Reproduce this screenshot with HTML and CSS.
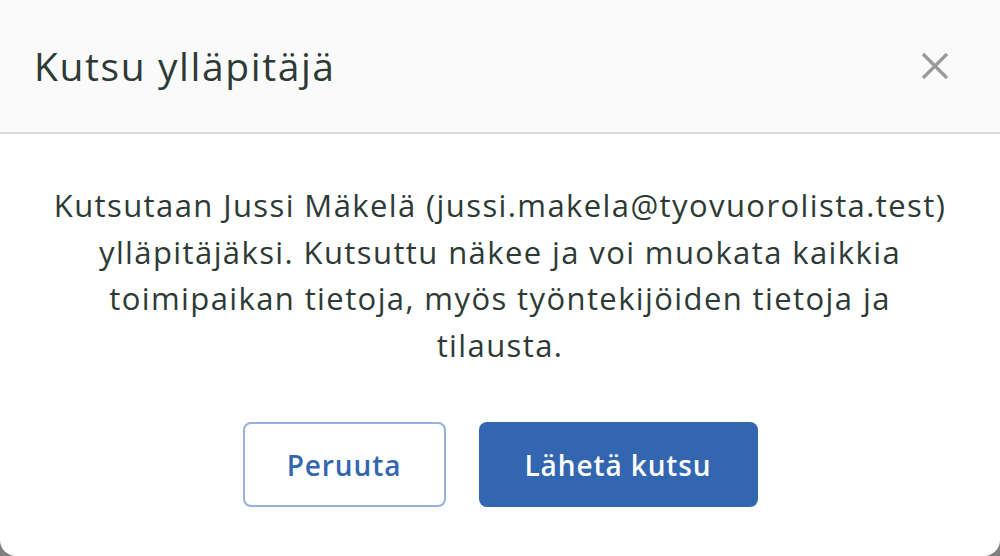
FILE: index.html
```html
<!DOCTYPE html>
<html lang="fi">
<head>
    <meta charset="UTF-8">
    <meta name="viewport" content="width=device-width, initial-scale=1.0">
    <title>Kutsu ylläpitäjä</title>
    <link rel="stylesheet" href="styles.css">
</head>
<body>
    <div class="modal">
        <header class="modal-header">
            <h2>Kutsu ylläpitäjä</h2>
            <button class="close-btn" aria-label="Sulje">
                <svg width="30" height="30" viewBox="0 0 30 30">
                    <path d="M3 3 L27 27 M27 3 L3 27" stroke="#999" stroke-width="3.2" fill="none"/>
                </svg>
            </button>
        </header>

        <div class="modal-body">
            <p>Kutsutaan Jussi Mäkelä (jussi.makela@tyovuorolista.test)<br>
            ylläpitäjäksi. Kutsuttu näkee ja voi muokata kaikkia<br>
            toimipaikan tietoja, myös työntekijöiden tietoja ja<br>
            tilausta.</p>

            <div class="actions">
                <button class="btn btn-secondary">Peruuta</button>
                <button class="btn btn-primary">Lähetä kutsu</button>
            </div>
        </div>
    </div>
</body>
</html>
```

FILE: styles.css
```css
:root {
    --text: #2d3a35;
    --blue: #3366b0;
    --blue-light: #95b1dc;
}
* {
    box-sizing: border-box;
    margin: 0;
    padding: 0;
    font-family: 'Open Sans', 'Noto Sans', sans-serif;
}
body {
    background-color: #7f7f7f;
    color: var(--text);
    height: 556px;
    overflow: hidden;
}
.modal {
    background: white;
    width: 1000px;
    height: 556px;
    border-radius: 0 0 16px 16px;
    overflow: hidden;
}
.modal-header {
    height: 134px;
    background: #fafafa;
    border-bottom: 2px solid #d9d9d9;
    display: flex;
    align-items: center;
    justify-content: space-between;
    padding: 0 50px 0 34px;
}
.modal-header h2 {
    font-size: 39px;
    font-weight: 500;
    letter-spacing: 1.6px;
    color: var(--text);
    padding-bottom: 2px;
}
.close-btn {
    background: none;
    border: none;
    width: 30px;
    height: 30px;
    cursor: pointer;
    display: flex;
}
.modal-body {
    padding: 48px 20px 0;
    text-align: center;
}
.modal-body p {
    font-size: 31px;
    line-height: 46.5px;
    letter-spacing: 1.4px;
}
.actions {
    display: flex;
    justify-content: center;
    gap: 33px;
    margin-top: 54px;
}
.btn {
    height: 85px;
    border-radius: 8px;
    font-size: 28px;
    font-weight: 600;
    letter-spacing: 0.9px;
    cursor: pointer;
}
.btn-secondary {
    width: 203px;
    background: white;
    color: var(--blue);
    border: 2px solid var(--blue-light);
}
.btn-primary {
    width: 279px;
    background: var(--blue);
    color: white;
    border: none;
}
```
